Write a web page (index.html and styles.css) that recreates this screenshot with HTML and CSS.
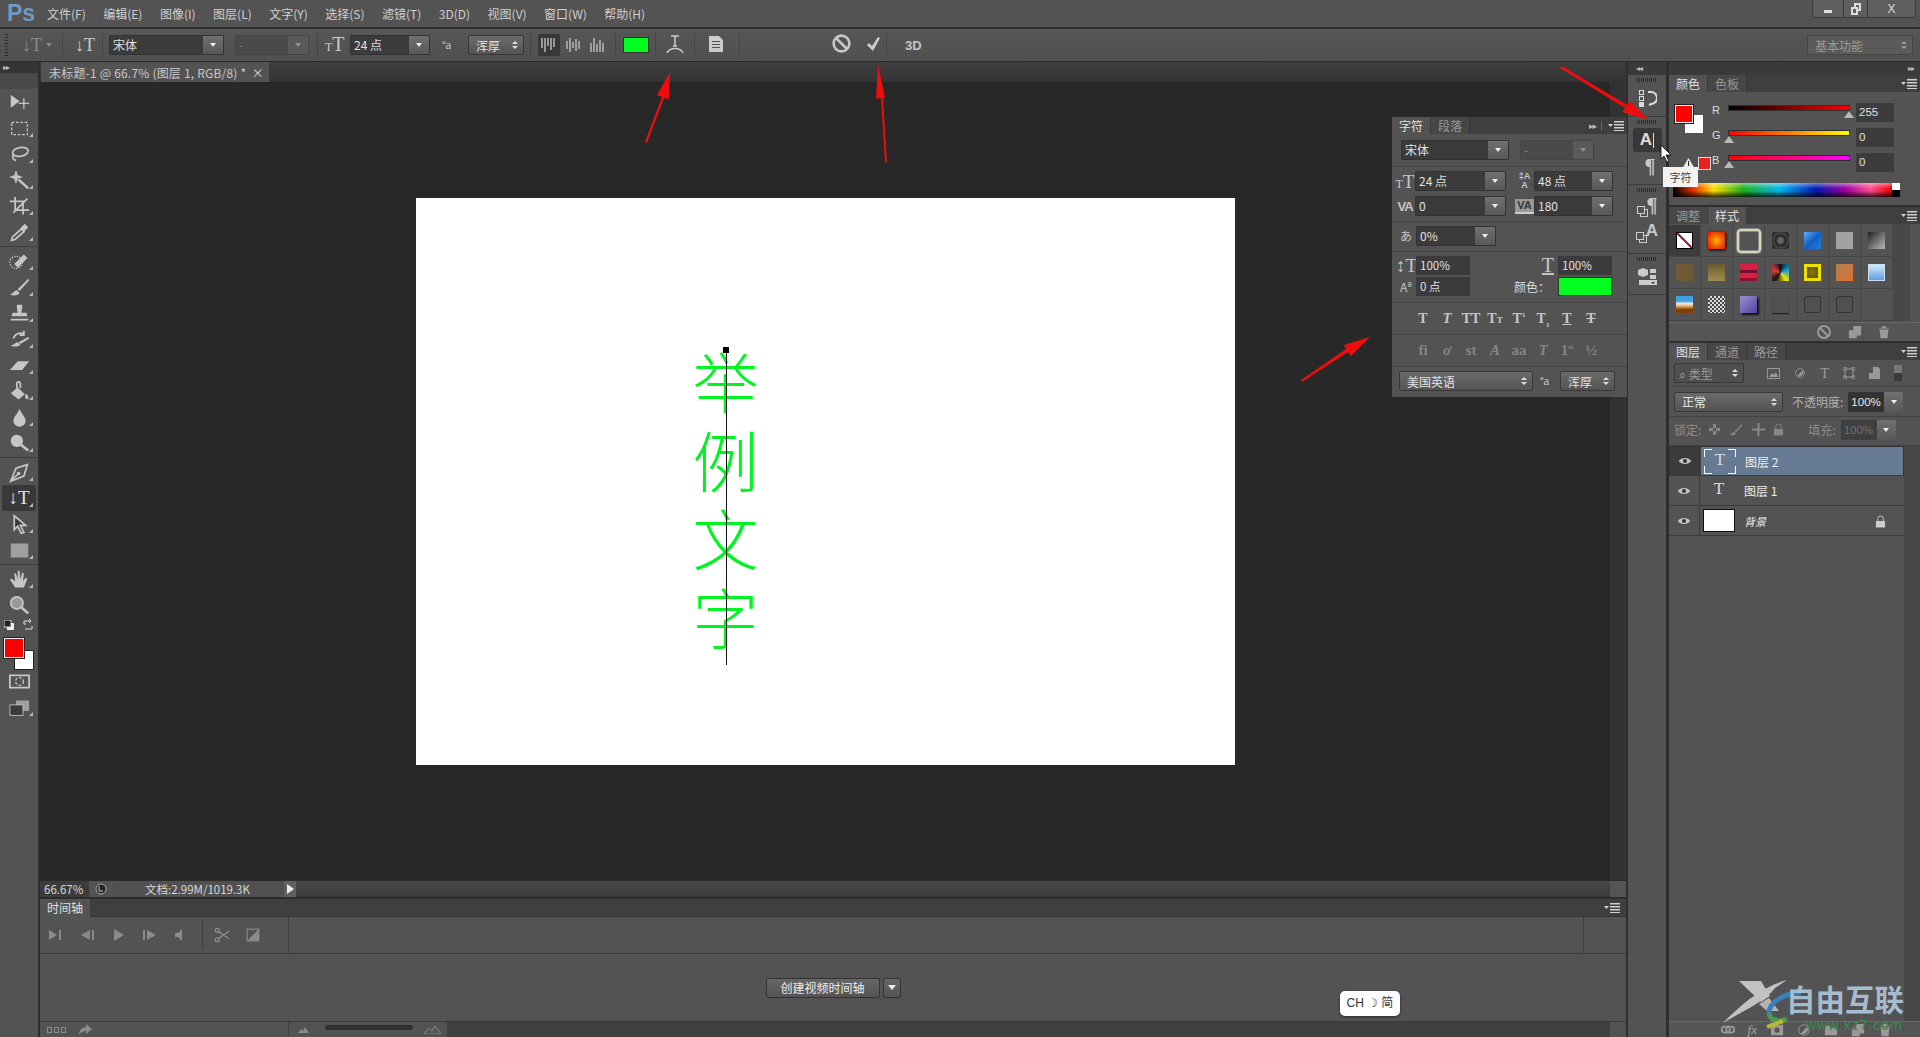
FILE: index.html
```html
<!DOCTYPE html>
<html lang="zh-CN">
<head>
<meta charset="utf-8">
<title>Photoshop</title>
<link rel="stylesheet" href="styles.css">
</head>
<body>
<svg class="sprite" aria-hidden="true">
  <defs>
    <symbol id="i-move" viewBox="0 0 24 24"><path d="M2 3v15l10-7.500z"/><path class="ln" d="M17 7v12M11 13h12"/></symbol>
    <symbol id="i-marquee" viewBox="0 0 24 24"><rect class="ln dash" x="3" y="5" width="18" height="14"/></symbol>
    <symbol id="i-lasso" viewBox="0 0 24 24"><ellipse class="ln w2" cx="13" cy="9" rx="9" ry="5" transform="rotate(-10 13 9)"/><path class="ln w2" d="M5 12c-2 3 0 6 3 7"/></symbol>
    <symbol id="i-wand" viewBox="0 0 24 24"><path d="M8 0l2 6 6 2-6 2-2 6-2-6-6-2 6-2z"/><path class="ln w3" d="M11 11l11 10"/></symbol>
    <symbol id="i-crop" viewBox="0 0 24 24"><path class="ln w2" d="M7 1v15h16M1 6h15v15M5 19L21 3"/></symbol>
    <symbol id="i-drop" viewBox="0 0 24 24"><path class="ln w2" d="M3 21l1-4 10-9 3 3-10 9z"/><path d="M13 7l5-5 4 4-5 5z"/></symbol>
    <symbol id="i-heal" viewBox="0 0 24 24"><circle class="ln dot" cx="8" cy="13" r="7"/><path class="ln w6" d="M8 17L19 6"/></symbol>
    <symbol id="i-brush" viewBox="0 0 24 24"><path d="M22 2L10 14l2 2L23 4z"/><path d="M9 15c-3 0-4 4-8 5 5 2 10 1 11-2z"/></symbol>
    <symbol id="i-stamp" viewBox="0 0 24 24"><path d="M9 2h6v4l-1 5h6l1 4H3l1-4h6L9 6zM2 18h20v2H2z"/></symbol>
    <symbol id="i-history" viewBox="0 0 24 24"><path d="M22 9L11 15l2 2 10-6z"/><path d="M10 15c-3 0-4 3-8 4 5 2 10 1 11-1z"/><path class="ln w2" d="M5 11a8 8 0 0 1 12-5M17 2v5h-5"/></symbol>
    <symbol id="i-eraser" viewBox="0 0 24 24"><path d="M1 17L10 7h13l-8 10z"/></symbol>
    <symbol id="i-bucket" viewBox="0 0 24 24"><path d="M2 14L10 7l8 8-7 6z"/><path class="ln w2" d="M9 8V3a2 2 0 0 1 4 0v5"/><path d="M19 14c2 2 4 4 3 6a2 2 0 0 1-3 0c-1-2 0-4 0-6z"/></symbol>
    <symbol id="i-blur" viewBox="0 0 24 24"><path d="M12 2c2 6 7 9 7 14a7 6.500 0 0 1-14 0c0-5 5-8 7-14z"/></symbol>
    <symbol id="i-dodge" viewBox="0 0 24 24"><circle cx="9" cy="9" r="7"/><path class="ln w3" d="M13 13l9 7"/></symbol>
    <symbol id="i-pen" viewBox="0 0 24 24"><path class="ln w2" d="M21 3L8 7 2 22l15-6 4-13zM2 22l8-8"/><circle cx="11" cy="13" r="2"/></symbol>
    <symbol id="i-path" viewBox="0 0 24 24"><path class="ln w2 dk" d="M6 2v16l4-4 4 8 3-1-4-8h6z"/></symbol>
    <symbol id="i-rect" viewBox="0 0 24 24"><rect x="2" y="4" width="20" height="16" class="gr"/></symbol>
    <symbol id="i-hand" viewBox="0 0 24 24"><path d="M7 21L1 12l2-1 4 3-1-9 2 0 2 7 0-10h2l1 10 2-8 2 1-1 9 3-4 2 1-4 10z"/></symbol>
    <symbol id="i-zoom" viewBox="0 0 24 24"><circle class="ln w2 fl" cx="9" cy="9" r="7"/><path class="ln w3" d="M14 14l8 7"/></symbol>
    <symbol id="i-mask" viewBox="0 0 24 24"><rect class="ln w2" x="1" y="5" width="22" height="14"/><circle class="ln dash" cx="12" cy="12" r="4.500"/></symbol>
    <symbol id="i-screen" viewBox="0 0 24 24"><rect x="8" y="4" width="15" height="12" class="gr"/><rect class="ln w1 dk" x="1" y="9" width="15" height="12"/></symbol>
    <symbol id="i-eye" viewBox="0 0 24 14"><path d="M1 7c5-7 17-7 22 0-5 7-17 7-22 0z"/><circle cx="12" cy="7" r="3.500" fill="#333"/></symbol>
    <symbol id="i-lock" viewBox="0 0 12 14"><path class="ln w1" d="M3 7V4a3 3 0 0 1 6 0v3"/><rect x="1" y="6.500" width="10" height="7"/></symbol>
    <symbol id="i-nosign" viewBox="0 0 16 16"><circle class="ln w2" cx="8" cy="8" r="6"/><path class="ln w2" d="M4 4l8 8"/></symbol>
    <symbol id="i-new" viewBox="0 0 16 16"><path d="M6 1h9v11H10v3H1V6h5z"/></symbol>
    <symbol id="i-trash" viewBox="0 0 16 16"><path d="M3 5h10l-1 10H4zM2 3h12v1H2zM6 1h4v2H6z"/></symbol>
    <symbol id="i-link" viewBox="0 0 16 16"><rect class="ln w2" x="1" y="4" width="9" height="7" rx="3"/><rect class="ln w2" x="6" y="4" width="9" height="7" rx="3"/></symbol>
    <symbol id="i-lmask" viewBox="0 0 16 16"><path fill-rule="evenodd" d="M1 2h14v12H1zM8 5a3 3 0 1 0 0 6 3 3 0 0 0 0-6z"/></symbol>
    <symbol id="i-half" viewBox="0 0 16 16"><circle class="ln w1" cx="8" cy="8" r="6"/><path d="M12 4a6 6 0 0 1-8 8z"/></symbol>
    <symbol id="i-folder" viewBox="0 0 16 16"><path d="M1 3h5l2 2h7v9H1z"/></symbol>
    <symbol id="i-scissors" viewBox="0 0 24 24"><circle class="ln w2" cx="5" cy="5" r="3"/><circle class="ln w2" cx="5" cy="19" r="3"/><path class="ln w2" d="M7 7l16 11M7 17L23 6"/></symbol>
    <symbol id="i-trans" viewBox="0 0 24 24"><rect class="ln w2" x="2" y="2" width="20" height="20"/><path d="M22 2v20H2z"/></symbol>
    <symbol id="i-menu" viewBox="0 0 16 10"><path d="M0 3h5L2.500 6zM6 0h10v1.500H6zM6 3h10v1.500H6zM6 6h10v1.500H6zM6 9h10v1H6z"/></symbol>
  </defs>
</svg>

<div class="app">
  <header class="menubar">
    <span class="logo">Ps</span>
    <nav class="menus">
      <span>文件(F)</span><span>编辑(E)</span><span>图像(I)</span><span>图层(L)</span><span>文字(Y)</span><span>选择(S)</span><span>滤镜(T)</span><span>3D(D)</span><span>视图(V)</span><span>窗口(W)</span><span>帮助(H)</span>
    </nav>
    <div class="winbtns">
      <span class="winbtn wb-min"><svg width="10" height="10" viewBox="0 0 10 10"><rect x="1" y="6" width="8" height="3" fill="#ddd"/></svg></span>
      <span class="winbtn wb-max"><svg width="10" height="12" viewBox="0 0 10 12"><path d="M3 0h7v8H7v4H0V4h3zM2 6v4h3V6zM5 2v2h2v2h1V2z" fill="#ddd"/></svg></span>
      <span class="winbtn wb-close">X</span>
    </div>
  </header>

  <div class="optionbar">
    <span class="grip-v"></span>
    <span class="ob-tool dim m14"><span class="serif big">↓T</span><i class="caret"></i></span>
    <span class="sep m8"></span>
    <span class="serif big m12 w18">↓T</span>
    <span class="sep m9"></span>
    <span class="sel m6 w115"><span class="val">宋体</span><span class="drop"></span></span>
    <span class="sel off m11 w74"><span class="val">-</span><span class="drop"></span></span>
    <span class="sep m8"></span>
    <span class="serif big m7 w18 tsize"><small>T</small>T</span>
    <span class="sel m7 w80"><span class="val">24 点</span><span class="drop"></span></span>
    <span class="aa m12">ªa</span>
    <span class="pop m10 w56"><span>浑厚</span><i class="updown"></i></span>
    <span class="sep m6"></span>
    <span class="alignbtn on m7"><svg width="16" height="14" viewBox="0 0 16 14"><path class="bars" d="M1 0v10M4 0v14M7 0v8M10 0v12M13 0v9"/></svg></span>
    <span class="alignbtn m4"><svg width="16" height="14" viewBox="0 0 16 14"><path class="bars" d="M1 3v8M4 0v14M7 4v6M10 1v12M13 3v8"/></svg></span>
    <span class="alignbtn m4"><svg width="16" height="14" viewBox="0 0 16 14"><path class="bars" d="M1 5v9M4 0v14M7 6v8M10 2v12M13 5v9"/></svg></span>
    <span class="sep m7"></span>
    <span class="colorchip m7"></span>
    <span class="sep m6"></span>
    <span class="m10 w18"><svg width="18" height="22" viewBox="0 0 18 22"><path d="M5 3h8M9 3v10M7 13h4" class="stk"/><path d="M1 20c3-6 13-6 16 0" class="stk"/></svg></span>
    <span class="sep m10"></span>
    <span class="m13 w18"><svg width="16" height="18" viewBox="0 0 16 18"><path fill="#ccc" fill-rule="evenodd" d="M1 1h10l4 4v12H1zM4 6v1h8V6zM4 9v1h8V9zM4 12v1h8v-1z"/></svg></span>
    <span class="sep m13"></span>
    <span class="m91 w18"><svg class="ic" width="16" height="16"><use href="#i-nosign"/></svg></span>
    <span class="m17 w18"><svg width="16" height="16" viewBox="0 0 16 16"><path fill="#ccc" d="M1 9l2-2 3 3 6-9 2 1-7 13z"/></svg></span>
    <span class="sep m2"></span>
    <span class="threed m18">3D</span>
    <span class="grow"></span>
    <span class="pop dimpop w106"><span>基本功能</span><i class="updown"></i></span>
  </div>

  <main class="main">
    <aside class="toolbar">
      <div class="tb-head">▸▸</div>
      <div class="tb-grip"></div>
      <div class="tools">
        <span class="tool plain"><svg class="ic"><use href="#i-move"/></svg></span>
        <span class="tool"><svg class="ic"><use href="#i-marquee"/></svg></span>
        <span class="tool"><svg class="ic"><use href="#i-lasso"/></svg></span>
        <span class="tool"><svg class="ic"><use href="#i-wand"/></svg></span>
        <span class="tool"><svg class="ic"><use href="#i-crop"/></svg></span>
        <span class="tool"><svg class="ic"><use href="#i-drop"/></svg></span>
        <span class="tool-sep"></span>
        <span class="tool"><svg class="ic"><use href="#i-heal"/></svg></span>
        <span class="tool"><svg class="ic"><use href="#i-brush"/></svg></span>
        <span class="tool"><svg class="ic"><use href="#i-stamp"/></svg></span>
        <span class="tool"><svg class="ic"><use href="#i-history"/></svg></span>
        <span class="tool"><svg class="ic"><use href="#i-eraser"/></svg></span>
        <span class="tool"><svg class="ic"><use href="#i-bucket"/></svg></span>
        <span class="tool"><svg class="ic"><use href="#i-blur"/></svg></span>
        <span class="tool"><svg class="ic"><use href="#i-dodge"/></svg></span>
        <span class="tool-sep"></span>
        <span class="tool"><svg class="ic"><use href="#i-pen"/></svg></span>
        <span class="tool active"><span class="serif toolT">↓T</span></span>
        <span class="tool"><svg class="ic"><use href="#i-path"/></svg></span>
        <span class="tool"><svg class="ic"><use href="#i-rect"/></svg></span>
        <span class="tool-sep"></span>
        <span class="tool"><svg class="ic"><use href="#i-hand"/></svg></span>
        <span class="tool plain"><svg class="ic"><use href="#i-zoom"/></svg></span>
      </div>
      <div class="swaprow">
        <svg width="10" height="10" viewBox="0 0 10 10"><rect x="3" y="3" width="7" height="7" fill="#eee"/><rect x="0" y="0" width="7" height="7" fill="#222" stroke="#ddd"/></svg>
        <svg width="12" height="12" viewBox="0 0 12 12"><path d="M2 5V2h7M7 0l2 2-2 2M2 5l2 0M10 7v3H3" stroke="#ddd" fill="none"/></svg>
      </div>
      <div class="fgbg"><span class="bgc"></span><span class="fgc"></span></div>
      <span class="tool plain mid"><svg class="ic"><use href="#i-mask"/></svg></span>
      <span class="tool"><svg class="ic"><use href="#i-screen"/></svg></span>
    </aside>

    <section class="center">
      <div class="docbar">
        <div class="doctab"><span>未标题-1 @ 66.7% (图层 1, RGB/8) *</span><b>×</b></div>
      </div>
      <div class="workrow">
        <div class="workspace">
          <div class="canvas">
            <div class="vtext">举例文字</div>
            <div class="caret-line"></div>
            <div class="caret-box"></div>
          </div>
        </div>
        <div class="vscroll"></div>
      </div>
      <div class="statusbar">
        <span class="zoomv">66.67%</span>
        <span class="stico"><svg width="12" height="12" viewBox="0 0 12 12"><circle cx="6" cy="6" r="5" fill="#222" stroke="#aaa"/><path d="M4 3v5h4" stroke="#ccc" fill="none"/></svg></span>
        <span class="docinfo">文档:2.99M/1019.3K</span>
        <span class="stplay"></span>
        <span class="hscroll"></span>
        <span class="corner"></span>
      </div>
      <div class="timeline">
        <div class="tl-tabs">
          <span class="tab on">时间轴</span>
          <span class="grow"></span>
          <svg class="menuic" width="16" height="10"><use href="#i-menu"/></svg>
        </div>
        <div class="tl-ctrl">
          <div class="tl-btns">
            <svg width="14" height="10" viewBox="0 0 14 10"><path d="M0 0l8 5-8 5zM10 0h2v10h-2z"/></svg>
            <svg width="14" height="10" viewBox="0 0 14 10"><path d="M9 0L0 5l9 5zM11 0h2v10h-2z"/></svg>
            <svg width="12" height="12" viewBox="0 0 12 12"><path d="M1 0l10 6-10 6z"/></svg>
            <svg width="14" height="10" viewBox="0 0 14 10"><path d="M0 0h2v10H0zM4 0l9 5-9 5z"/></svg>
            <svg width="10" height="12" viewBox="0 0 10 12"><path d="M7 0v12L3 8H0V4h3z"/></svg>
          </div>
          <div class="tl-edit">
            <svg class="ic2" width="18" height="16"><use href="#i-scissors"/></svg>
            <svg class="ic2" width="14" height="14"><use href="#i-trans"/></svg>
          </div>
          <div class="tl-track"></div>
          <div class="tl-end"></div>
        </div>
        <div class="tl-body">
          <span class="tl-create">创建视频时间轴</span>
          <span class="tl-caret"></span>
        </div>
        <div class="tl-foot">
          <div class="tl-foot-l">
            <span class="tiny"></span><span class="tiny"></span><span class="tiny"></span>
            <svg class="fwd" width="14" height="12" viewBox="0 0 14 12"><path fill="#8a8a8a" d="M8 0l6 5-6 5V7C5 7 3 8 1 11c0-5 3-8 7-8z"/></svg>
          </div>
          <div class="tl-foot-m">
            <svg width="11" height="6" viewBox="0 0 11 6"><path d="M0 6l3-4 2 2 2-4 4 6z" fill="#8a8a8a"/></svg>
            <span class="tl-slider"></span>
            <svg width="17" height="8" viewBox="0 0 17 8"><path d="M0 8l5-6 3 3 3-5 6 8z" fill="none" stroke="#8a8a8a"/></svg>
          </div>
          <div class="tl-foot-r"></div>
        </div>
      </div>
    </section>

    <aside class="dock">
      <div class="collapse-bar collapse-left">◂◂</div>
      <div class="dk-group g1"><span class="grip-h"></span>
        <svg class="dk-ic" width="20" height="20" viewBox="0 0 20 20"><path fill="#ddd" fill-rule="evenodd" d="M2 2h5v5H2zM3 3v3h3V3zM2 8h5v5H2zM3 9v3h3V9zM2 14h5v5H2z"/><path fill="none" stroke="#ddd" stroke-width="2" d="M11 4h3a6 6 0 0 1 0 12l-2 1"/></svg>
      </div>
      <div class="dk-group g2"><span class="grip-h"></span>
        <span class="dk-a"><b>A</b><i></i></span>
        <span class="dk-p">¶</span>
      </div>
      <div class="dk-group g3"><span class="grip-h"></span>
        <span class="dk-p small"><i class="squares"></i>¶</span>
        <span class="dk-p small cap"><i class="squares"></i>A</span>
      </div>
      <div class="dk-group g4"><span class="grip-h"></span>
        <svg class="dk-ic" width="20" height="20" viewBox="0 0 20 20"><path fill="#ccc" d="M6 1l5 2v5l-5 2-5-2V3zM13 2h6v4h-6zM13 8h6v4h-6zM2 13h18v5H2z"/><path fill="#333" d="M14 15h4l-2 2z"/></svg>
      </div>
    </aside>

    <aside class="panels">
      <div class="collapse-bar collapse-right">▸▸</div>

      <section class="panel p-color">
        <div class="ptabs"><span class="tab on">颜色</span><span class="tab">色板</span><span class="grow"></span><svg class="menuic" width="16" height="10"><use href="#i-menu"/></svg></div>
        <div class="colorbody">
          <div class="colortop">
            <div class="swatches"><span class="sw-bg"></span><span class="sw-fg"></span></div>
            <div class="sliders">
              <div class="sl-row"><span class="sl-lbl">R</span><span class="track tr"><i class="thumb thumb-end"></i></span><span class="val-box">255</span></div>
              <div class="sl-row"><span class="sl-lbl">G</span><span class="track tg"><i class="thumb"></i></span><span class="val-box">0</span></div>
              <div class="sl-row"><span class="sl-lbl">B</span><span class="track tb"><i class="thumb"></i></span><span class="val-box">0</span></div>
            </div>
          </div>
          <div class="gamut"><svg width="13" height="11" viewBox="0 0 13 11"><path d="M6.500 0L13 11H0z" fill="#eee"/><path d="M6 3h1v5H6zM6 9h1v1H6z" fill="#222"/></svg><span class="gamut-chip"></span></div>
          <div class="spectrum"><span class="wk"></span></div>
        </div>
      </section>

      <section class="panel p-styles">
        <div class="ptabs"><span class="tab">调整</span><span class="tab on">样式</span><span class="grow"></span><svg class="menuic" width="16" height="10"><use href="#i-menu"/></svg></div>
        <div class="stylesbody">
          <div class="stylegrid">
            <span class="cell sel-cell"><i class="st st-none"></i></span>
            <span class="cell"><i class="st st-fire"></i></span>
            <span class="cell"><i class="st st-frame"></i></span>
            <span class="cell"><i class="st st-dark"></i></span>
            <span class="cell"><i class="st st-blue"></i></span>
            <span class="cell"><i class="st st-gray"></i></span>
            <span class="cell"><i class="st st-steel"></i></span>
            <span class="cell"><i class="st st-brown"></i></span>
            <span class="cell"><i class="st st-khaki"></i></span>
            <span class="cell"><i class="st st-red"></i></span>
            <span class="cell"><i class="st st-multi"></i></span>
            <span class="cell"><i class="st st-gold"></i></span>
            <span class="cell"><i class="st st-orange"></i></span>
            <span class="cell"><i class="st st-sky"></i></span>
            <span class="cell"><i class="st st-land"></i></span>
            <span class="cell"><i class="st st-noise"></i></span>
            <span class="cell"><i class="st st-purple"></i></span>
            <span class="cell"><i class="st st-shadow"></i></span>
            <span class="cell"><i class="st st-outline"></i></span>
            <span class="cell"><i class="st st-outline"></i></span>
            <span class="cell blank"></span>
          </div>
          <div class="stylescroll"></div>
        </div>
        <div class="pfoot pfoot-styles">
          <svg class="fic" width="16" height="16"><use href="#i-nosign"/></svg>
          <svg class="fic" width="14" height="14"><use href="#i-new"/></svg>
          <svg class="fic" width="14" height="14"><use href="#i-trash"/></svg>
        </div>
      </section>

      <section class="panel p-layers">
        <div class="ptabs"><span class="tab on">图层</span><span class="tab">通道</span><span class="tab">路径</span><span class="grow"></span><svg class="menuic" width="16" height="10"><use href="#i-menu"/></svg></div>
        <div class="lrow lfilter">
          <span class="pop fpop"><span>⌕ 类型</span><i class="updown"></i></span>
          <span class="ficons">
            <svg width="13" height="11" viewBox="0 0 13 11"><path fill="none" stroke="#999" d="M.5.5h12v10H.5z"/><path fill="#999" d="M2 9l3-4 2 2 2-3 2 5z"/></svg>
            <svg width="12" height="12"><use href="#i-half"/></svg>
            <span class="serif ft">T</span>
            <svg width="12" height="12" viewBox="0 0 12 12"><path fill="none" stroke="#999" d="M2 2h8v8H2zM0 0h3v3H0zM9 0h3v3H9zM0 9h3v3H0zM9 9h3v3H9z"/></svg>
            <svg width="11" height="12" viewBox="0 0 11 12"><path fill="#999" d="M4 0h5l2 2v10H4zM0 6h6v6H0z"/></svg>
          </span>
          <span class="ftoggle"></span>
        </div>
        <div class="lrow lblend">
          <span class="pop blendpop"><span>正常</span><i class="updown"></i></span>
          <span class="lbl">不透明度:</span>
          <span class="numfield nf-op"><span class="numv">100%</span><span class="drop"></span></span>
        </div>
        <div class="lrow llock">
          <span class="lbl dimlbl">锁定:</span>
          <svg class="lk" width="11" height="11" viewBox="0 0 11 11"><path fill="#888" d="M0 0h11v11H0z"/><path fill="#555" d="M0 0h4v4H0zM7 0h4v4H7zM4 4h3v3H4zM0 7h4v4H0zM7 7h4v4H7z"/></svg>
          <svg class="lk lkdim" width="16" height="14"><use href="#i-brush"/></svg>
          <svg class="lk" width="13" height="13" viewBox="0 0 13 13"><path stroke="#888" stroke-width="2" d="M6.500 0v13M0 6.500h13"/></svg>
          <svg class="lk lkdim" width="11" height="13"><use href="#i-lock"/></svg>
          <span class="lbl dimlbl fillbl">填充:</span>
          <span class="numfield nf-fill"><span class="numv">100%</span><span class="drop"></span></span>
        </div>
        <div class="layers">
          <div class="layerlist">
            <div class="layer sel">
              <span class="eye"><svg width="14" height="8"><use href="#i-eye"/></svg></span>
              <div class="lmain"><span class="lthumb tsel serif">T</span><span class="lname">图层 2</span></div>
            </div>
            <div class="layer">
              <span class="eye"><svg width="14" height="8"><use href="#i-eye"/></svg></span>
              <div class="lmain"><span class="lthumb serif">T</span><span class="lname">图层 1</span></div>
            </div>
            <div class="layer">
              <span class="eye"><svg width="14" height="8"><use href="#i-eye"/></svg></span>
              <div class="lmain"><span class="lthumb white"></span><span class="lname it">背景</span><svg class="lockbg" width="11" height="13"><use href="#i-lock"/></svg></div>
            </div>
          </div>
          <div class="layerscroll"></div>
        </div>
        <div class="pfoot pfoot-layers">
          <svg class="fic" width="14" height="14"><use href="#i-link"/></svg>
          <span class="fx">fx</span>
          <svg class="fic" width="14" height="14"><use href="#i-lmask"/></svg>
          <svg class="fic" width="14" height="14"><use href="#i-half"/></svg>
          <svg class="fic" width="14" height="14"><use href="#i-folder"/></svg>
          <svg class="fic" width="14" height="14"><use href="#i-new"/></svg>
          <svg class="fic" width="14" height="14"><use href="#i-trash"/></svg>
        </div>
      </section>
    </aside>
  </main>

  <!-- floating character panel -->
  <section class="charpanel">
    <div class="ptabs"><span class="tab on">字符</span><span class="tab">段落</span><span class="grow"></span><span class="cp-arrows">▸▸</span><svg class="menuic" width="16" height="10"><use href="#i-menu"/></svg></div>
    <div class="cp-sec s-a">
      <span class="sel w108"><span class="val">宋体</span><span class="drop"></span></span>
      <span class="sel off w74 m11"><span class="val">-</span><span class="drop"></span></span>
    </div>
    <div class="cp-sec s-b">
      <div class="cp-row">
        <span class="cp-ic serif"><small>T</small>T</span>
        <span class="sel w91"><span class="val">24 点</span><span class="drop"></span></span>
        <span class="cp-ic2 lead">‡A<br>A</span>
        <span class="sel w79"><span class="val">48 点</span><span class="drop"></span></span>
      </div>
      <div class="cp-row">
        <span class="cp-ic va">VA</span>
        <span class="sel w91"><span class="val">0</span><span class="drop"></span></span>
        <span class="cp-ic2 vab">VA</span>
        <span class="sel w79"><span class="val">180</span><span class="drop"></span></span>
      </div>
    </div>
    <div class="cp-sec s-c">
      <span class="cp-ic sm">あ</span>
      <span class="sel w80"><span class="val">0%</span><span class="drop"></span></span>
    </div>
    <div class="cp-sec s-d">
      <div class="cp-row">
        <span class="cp-ic serif">↕T</span>
        <span class="numbox">100%</span>
        <span class="cp-ic3 serif">T</span>
        <span class="numbox">100%</span>
      </div>
      <div class="cp-row">
        <span class="cp-ic sm aab">Aª</span>
        <span class="numbox">0 点</span>
        <span class="cp-color-lbl">颜色：</span>
        <span class="cp-color"></span>
      </div>
    </div>
    <div class="cp-sec s-e serif">
      <b>T</b><b><em>T</em></b><b>TT</b><b>T<small>T</small></b><b>T<sup>1</sup></b><b>T<sub>1</sub></b><b><u>T</u></b><b><s>T</s></b>
    </div>
    <div class="cp-sec s-e s-f serif">
      <b>fi</b><b><em>ơ</em></b><b>st</b><b><em>A</em></b><b>aa</b><b><em>T</em></b><b>1<sup>st</sup></b><b>½</b>
    </div>
    <div class="cp-sec s-g">
      <span class="pop w134"><span>美国英语</span><i class="updown"></i></span>
      <span class="aa m7">ªa</span>
      <span class="pop w55 m6"><span>浑厚</span><i class="updown"></i></span>
    </div>
  </section>

  <!-- overlays -->
  <svg class="arrows" width="1920" height="1037" viewBox="0 0 1920 1037">
    <path class="arrow" d="M645 142L662 97 657 95 670 72 669 99 664 98 647 143z"/>
    <path class="arrow" d="M885 162L881 98 876 99 878 64 885 98 883 98 887 162z"/>
    <path class="arrow" d="M1560 68L1625 108 1622 112 1648 120 1630 101 1627 105 1562 66z"/>
    <path class="arrow" d="M1302 382L1348 352 1351 356 1370 337 1344 345 1346 349 1301 380z"/>
  </svg>
  <svg class="cursor" width="12" height="19" viewBox="0 0 12 19"><path d="M1 1v14l3-3 3 6 2-1-3-6h5z" fill="#fff" stroke="#000" stroke-width=".8"/></svg>
  <div class="tooltip">字符</div>
  <div class="ime">CH ☽ 简</div>
  <div class="watermark">
    <svg class="wm-logo" width="84" height="50" viewBox="0 0 84 50">
      <path fill="#c2c2c2" d="M64 1C45 6 25 18 0 44 18 33 42 23 52 9z"/>
      <path fill="#c2c2c2" d="M16 2H38L47 17 38 23z"/>
      <path fill="#b4b4b4" d="M36 25L46 19 56 32H44z"/>
      <path fill="none" stroke="#3a7fb5" stroke-width="5" d="M78 14C60 14 46 24 46 34"/>
      <path fill="none" stroke="#4a9a50" stroke-width="5" d="M46 34C47 42 56 44 64 40"/>
      <path fill="none" stroke="#b8b830" stroke-width="4" d="M44 48C48 46 54 44 60 42"/>
    </svg>
    <div class="wm-text"><span class="wm-cn">自由互联</span><span class="wm-url">www.xz7.com</span></div>
  </div>
</div>
</body>
</html>
```

FILE: styles.css
```css
* { box-sizing: border-box; }
html, body { margin: 0; height: 100%; overflow: hidden; background: #535353; }
body { font-family: "Noto Sans CJK SC", "Liberation Sans", sans-serif; font-size: 12px; color: #d6d6d6; }
i { font-style: normal; }
.sprite { position: absolute; width: 0; height: 0; }
.grow { flex: 1; }
.serif { font-family: "Liberation Serif", "Noto Sans CJK SC", serif; }

.app { position: relative; width: 1920px; height: 1037px; display: flex; flex-direction: column; }

/* shared icon styling */
svg { color: #c6c6c6; fill: currentColor; flex: none; }
svg .ln { fill: none; stroke: currentColor; stroke-width: 1.500; }
svg .w1 { stroke-width: 1; } svg .w2 { stroke-width: 2; } svg .w3 { stroke-width: 3; } svg .w6 { stroke-width: 6; }
svg .dash { stroke-dasharray: 3 2; }
svg .dot { stroke-dasharray: 1.500 1.500; }
svg .dk { fill: #3a3a3a; }
svg .fl { fill: #999; }
svg .gr { fill: #a0a0a0; }
svg path.stk { fill: none; stroke: #ccc; stroke-width: 1.500; }
svg path.bars { fill: none; stroke: #b8b8b8; stroke-width: 1.500; }

/* menu */
.menubar { height: 29px; flex: none; display: flex; align-items: flex-start; background: #535353; border-bottom: 2px solid #2e2e2e; position: relative; }
.logo { font: bold 23px/26px "Liberation Sans", sans-serif; color: #6f9ac4; width: 47px; padding-left: 7px; }
.menus { display: flex; gap: 17.500px; line-height: 27px; color: #cfcfcf; }
.winbtns { margin-left: auto; margin-right: 4px; display: flex; background: #5e5e5e; height: 18px; border: 1px solid #3a3a3a; border-top: 0; border-radius: 0 0 2px 2px; }
.winbtn { display: flex; align-items: center; justify-content: center; border-left: 1px solid #3a3a3a; color: #ddd; font: 12px "Liberation Sans", sans-serif; }
.wb-min { width: 30px; border-left: 0; }
.wb-max { width: 24px; }
.wb-close { width: 48px; }

/* option bar */
.optionbar { height: 33px; flex: none; display: flex; align-items: center; padding-left: 5px; padding-right: 7px; background: linear-gradient(#565656, #505050); border-bottom: 1px solid #2e2e2e; }
.grip-v { width: 3px; height: 22px; background: repeating-linear-gradient(#2c2c2c 0 1px, transparent 1px 3px); }
.sep { width: 1px; height: 26px; background: #464646; flex: none; }
.big { font-size: 18px; line-height: 20px; color: #c8c8c8; white-space: nowrap; }
.big small { font-size: 12px; }
.dim { color: #8a8a8a; }
.dim .big { color: #8a8a8a; }
.ob-tool { display: flex; align-items: center; width: 32px; }
.caret { border: 3px solid transparent; border-top: 4px solid #8a8a8a; border-bottom: 0; margin-left: 4px; }
.m2 { margin-left: 2px; } .m4 { margin-left: 4px; } .m6 { margin-left: 6px; } .m7 { margin-left: 7px; } .m8 { margin-left: 8px; } .m9 { margin-left: 9px; } .m10 { margin-left: 10px; } .m11 { margin-left: 11px; } .m12 { margin-left: 12px; } .m13 { margin-left: 13px; } .m14 { margin-left: 14px; } .m17 { margin-left: 17px; } .m18 { margin-left: 18px; } .m91 { margin-left: 91px; }
.w18 { width: 18px; } .w55 { width: 55px; } .w56 { width: 56px; } .w74 { width: 74px; } .w79 { width: 79px; } .w80 { width: 80px; } .w91 { width: 91px; } .w106 { width: 106px; } .w108 { width: 108px; } .w115 { width: 115px; } .w134 { width: 134px; }
.tsize { font-size: 20px; }

.sel { display: flex; height: 20px; flex: none; background: #3b3b3b; border: 1px solid #333; border-radius: 1px; overflow: hidden; }
.sel .val { flex: 1; padding-left: 3px; line-height: 18px; color: #e0e0e0; white-space: nowrap; }
.drop { width: 20px; flex: none; background: linear-gradient(#707070, #585858); display: flex; align-items: center; justify-content: center; }
.drop::after { content: ""; border: 3px solid transparent; border-top: 4px solid #eee; border-bottom: 0; }
.sel.off { background: #4a4a4a; border-color: #454545; }
.sel.off .val { color: #808080; }
.sel.off .drop { background: #5a5a5a; }
.sel.off .drop::after { border-top-color: #909090; }
.aa { color: #c8c8c8; font: 13px "Liberation Serif", serif; width: 16px; flex: none; }

.pop { display: flex; align-items: center; justify-content: space-between; height: 20px; flex: none; padding: 0 5px 0 7px; background: linear-gradient(#6a6a6a, #545454); border: 1px solid #383838; border-radius: 2px; color: #e4e4e4; white-space: nowrap; }
.updown { display: flex; flex-direction: column; gap: 2px; flex: none; }
.updown::before { content: ""; border: 3px solid transparent; border-bottom: 3px solid #ddd; border-top: 0; }
.updown::after { content: ""; border: 3px solid transparent; border-top: 3px solid #ddd; border-bottom: 0; }
.dimpop { background: #5a5a5a; border-color: #464646; color: #999; }
.dimpop .updown::before { border-bottom-color: #999; }
.dimpop .updown::after { border-top-color: #999; }

.alignbtn { display: flex; align-items: center; justify-content: center; width: 20px; height: 22px; flex: none; }
.alignbtn.on { background: #383838; border-radius: 2px; width: 22px; }
.colorchip { width: 26px; height: 16px; background: #00ff1e; border: 1px solid #333; flex: none; }
.threed { font: bold 13px "Liberation Sans", sans-serif; color: #c4c4c4; }

/* main */
.main { flex: 1; min-height: 0; display: flex; background: #2e2e2e; }

/* tools */
.toolbar { width: 38px; margin-right: 2px; flex: none; display: flex; flex-direction: column; align-items: center; background: #535353; }
.tb-head { width: 100%; height: 11px; background: #353535; color: #bbb; font: 8px/11px "DejaVu Sans", sans-serif; padding-left: 3px; letter-spacing: -1px; }
.tb-grip { width: 100%; height: 16px; background: #4a4a4a; }
.tools { display: flex; flex-direction: column; align-items: center; width: 100%; }
.tool { position: relative; width: 34px; height: 26px; display: flex; align-items: center; justify-content: center; flex: none; }
.tool::after { content: ""; position: absolute; right: 3px; bottom: 4px; border-left: 4px solid transparent; border-bottom: 4px solid #bbb; }
.tool.plain::after { display: none; }
.tool.active { background: #383838; border-radius: 2px; }
.ic { width: 21px; height: 21px; }
.tool-sep { width: 100%; height: 1px; margin: 1px 0; background: #3e3e3e; flex: none; }
.toolT { font-size: 19px; line-height: 20px; color: #e4e4e4; }
.swaprow { width: 30px; height: 14px; display: flex; justify-content: space-between; align-items: center; flex: none; }
.fgbg { position: relative; width: 30px; height: 36px; margin-top: 6px; flex: none; }
.fgc { position: absolute; left: 0; top: 0; width: 20px; height: 20px; background: #f00; border: 1px solid #eee; outline: 1px solid #222; }
.bgc { position: absolute; left: 11px; top: 13px; width: 18px; height: 18px; background: #fff; outline: 1px solid #222; }
.mid { margin-top: -6px; }

/* center */
.center { width: 1586px; flex: none; display: flex; flex-direction: column; margin-right: 2px; background: #2b2b2b; }
.docbar { height: 20px; flex: none; background: linear-gradient(#3e3e3e, #333); display: flex; align-items: flex-start; }
.doctab { margin-left: 1px; width: 228px; height: 20px; background: #535353; display: flex; align-items: center; justify-content: space-between; padding: 0 5px 0 8px; color: #c8c8c8; font-size: 12px; letter-spacing: .2px; white-space: nowrap; }
.doctab b { font-weight: 400; color: #ddd; }
.workrow { flex: 1; min-height: 0; display: flex; }
.workspace { flex: 1; display: flex; align-items: center; justify-content: center; background: #282828; }
.vscroll { width: 16px; background: #323232; flex: none; }
.canvas { position: relative; width: 819px; height: 567px; background: #fff; flex: none; }
.vtext { position: absolute; left: 277px; top: 152px; width: 66px; height: 314px; writing-mode: vertical-rl; text-orientation: upright; font-size: 66px; line-height: 66px; letter-spacing: 12.500px; color: #00f520; font-weight: 300; white-space: nowrap; }
.caret-line { position: absolute; left: 310px; top: 150px; width: 1px; height: 317px; background: #111; }
.caret-box { position: absolute; left: 307px; top: 149px; width: 6px; height: 6px; background: #000; }

.statusbar { height: 16px; flex: none; margin-top: 1px; display: flex; align-items: stretch; background: #4e4e4e; color: #d8d8d8; font: 11.500px/16px "Noto Sans CJK SC", "Liberation Sans", sans-serif; }
.zoomv { width: 49px; padding-left: 4px; background: #3c3c3c; flex: none; }
.stico { width: 24px; flex: none; display: flex; align-items: center; justify-content: center; background: #535353; }
.docinfo { width: 171px; flex: none; padding-left: 32px; background: #505050; white-space: nowrap; }
.stplay { width: 12px; flex: none; background: #606060; position: relative; }
.stplay::after { content: ""; position: absolute; left: 3px; top: 3px; border: 5px solid transparent; border-left: 7px solid #eee; border-right: 0; }
.hscroll { flex: 1; background: linear-gradient(#4a4a4a, #3a3a3a); }
.corner { width: 16px; flex: none; background: #555; }

/* timeline */
.timeline { height: 139px; flex: none; margin-top: 1px; background: #535353; display: flex; flex-direction: column; border-top: 1px solid #2e2e2e; }
.tl-tabs { height: 18px; flex: none; display: flex; align-items: center; background: #3f3f3f; border-bottom: 1px solid #333; padding-right: 6px; }
.tab { display: flex; align-items: center; justify-content: center; height: 100%; padding: 0 7px; color: #989898; background: #474747; border-right: 1px solid #3a3a3a; flex: none; font-size: 12px; }
.tab.on { color: #e0e0e0; background: #535353; }
.tl-tabs .tab { padding: 0 7px; width: 51px; height: 18px; }
.menuic { color: #d0d0d0; }
.tl-ctrl { height: 37px; flex: none; display: flex; align-items: stretch; border-bottom: 1px solid #3a3a3a; }
.tl-btns { width: 162px; display: flex; align-items: center; justify-content: space-between; padding: 0 17px 0 9px; }
.tl-btns svg { color: #8a8a8a; }
.tl-edit { width: 86px; display: flex; align-items: center; gap: 15px; padding-left: 10px; border-left: 1px solid #3f3f3f; margin: 3px 0; }
.ic2 { color: #8a8a8a; }
.tl-track { flex: 1; border-left: 1px solid #3f3f3f; }
.tl-end { width: 43px; border-left: 1px solid #3f3f3f; }
.tl-body { flex: 1; display: flex; align-items: center; justify-content: center; gap: 3px; background: #535353; }
.tl-create { width: 114px; height: 20px; line-height: 18px; text-align: center; color: #eee; background: linear-gradient(#666, #545454); border: 1px solid #333; border-radius: 2px; }
.tl-caret { width: 18px; height: 20px; background: linear-gradient(#666, #545454); border: 1px solid #333; border-radius: 2px; display: flex; align-items: center; justify-content: center; }
.tl-caret::after { content: ""; border: 4px solid transparent; border-top: 5px solid #eee; border-bottom: 0; }
.tl-foot { height: 16px; flex: none; display: flex; border-top: 1px solid #3a3a3a; }
.tl-foot-l { width: 248px; display: flex; align-items: center; gap: 2px; padding-left: 7px; }
.tiny { width: 5px; height: 6px; border: 1px solid #8a8a8a; }
.fwd { margin-left: 10px; }
.tl-foot-m { width: 159px; display: flex; align-items: center; padding-left: 9px; border-left: 1px solid #3f3f3f; }
.tl-slider { width: 88px; height: 5px; margin: 0 11px 5px 16px; background: #333; border-radius: 3px; border: 1px solid #2a2a2a; }
.tl-foot-r { flex: 1; background: #3f3f3f; margin-right: 16px; }

/* dock */
.dock { width: 38px; flex: none; margin-right: 3px; background: #535353; display: flex; flex-direction: column; }
.collapse-bar { height: 13px; flex: none; background: #3a3a3a; color: #bbb; font: 8px/13px "DejaVu Sans", sans-serif; letter-spacing: -1px; }
.collapse-left { padding-left: 8px; }
.collapse-right { text-align: right; padding-right: 6px; }
.dk-group { display: flex; flex-direction: column; align-items: center; border-bottom: 1px solid #3c3c3c; flex: none; padding-top: 3px; }
.g1 { height: 42px; } .g2 { height: 68px; } .g3 { height: 69px; } .g4 { height: 41px; }
.grip-h { width: 20px; height: 4px; background: repeating-linear-gradient(90deg, #2c2c2c 0 1px, transparent 1px 2px); flex: none; }
.dk-ic { margin-top: 6px; }
.dk-a { margin-top: 4px; width: 29px; height: 24px; background: #383838; border-radius: 3px; display: flex; align-items: center; justify-content: center; gap: 1px; font: bold 17px "Liberation Sans", sans-serif; color: #ddd; }
.dk-a b { font-weight: 700; }
.dk-a i { width: 1px; height: 15px; background: #ddd; }
.dk-p { margin-top: 0; height: 28px; font: bold 20px/28px "Liberation Serif", serif; color: #c8c8c8; position: relative; padding-left: 6px; }
.dk-p.small { margin-top: 1px; height: 25px; line-height: 24px; padding-left: 10px; }
.dk-p.cap { font-family: "Liberation Sans", sans-serif; font-size: 17px; }
.squares { position: absolute; left: 0; bottom: 4px; width: 8px; height: 8px; border: 1px solid #ccc; box-shadow: 3px 3px 0 -1px #535353, 3px 3px 0 0 #ccc; }

/* panels */
.panels { width: 251px; flex: none; display: flex; flex-direction: column; background: #2e2e2e; }
.panel { background: #535353; display: flex; flex-direction: column; flex: none; }
.ptabs { height: 17px; flex: none; display: flex; align-items: center; background: #3f3f3f; padding-right: 3px; }
.ptabs .tab { width: 39px; padding: 0; }
.p-color { height: 130px; margin-bottom: 2px; }
.colorbody { position: relative; flex: 1; padding: 11px 0 0 4px; }
.colortop { display: flex; }
.swatches { position: relative; width: 39px; height: 30px; flex: none; }
.sw-fg { position: absolute; left: 2px; top: 2px; width: 18px; height: 18px; background: #f00; border: 1px solid #eee; outline: 1px solid #222; }
.sw-bg { position: absolute; left: 12px; top: 12px; width: 18px; height: 18px; background: #fff; }
.sliders { display: flex; flex-direction: column; gap: 6px; }
.sl-row { display: flex; height: 19px; }
.sl-lbl { width: 16px; color: #ddd; font: 11px/15px "Liberation Sans", sans-serif; flex: none; }
.track { position: relative; width: 122px; height: 6px; margin-top: 2px; flex: none; border: 1px solid #2e2e2e; }
.tr { background: linear-gradient(90deg, #000, #f00); }
.tg { background: linear-gradient(90deg, #f00, #ff0); }
.tb { background: linear-gradient(90deg, #f00, #f0f); }
.thumb { position: absolute; left: -5px; top: 5px; border: 5px solid transparent; border-bottom: 7px solid #b8b8b8; border-top: 0; }
.thumb-end { left: auto; right: -5px; }
.val-box { width: 38px; height: 19px; margin-left: 6px; background: #3c3c3c; line-height: 19px; padding-left: 3px; color: #e0e0e0; flex: none; font-family: "Liberation Sans", sans-serif; font-size: 11.500px; }
.gamut { position: absolute; left: 13px; top: 65px; display: flex; align-items: center; gap: 3px; }
.gamut-chip { width: 13px; height: 13px; background: #e82020; border: 1px solid #ddd; }
.spectrum { position: relative; width: 227px; height: 14px; margin-top: 11px; background: linear-gradient(rgba(255,255,255,.45), rgba(255,255,255,0) 40%, rgba(0,0,0,0) 55%, rgba(0,0,0,.8)), linear-gradient(90deg, #000 0%, #e83000 9%, #ffe000 18%, #20b020 31%, #00b8f0 47%, #0018b0 63%, #a000a0 76%, #ff5090 87%, #f00000 96%); }
.wk { position: absolute; right: 0; top: 0; width: 8px; height: 14px; background: linear-gradient(#fff 50%, #000 50%); }
.p-styles { height: 134px; margin-bottom: 2px; }
.stylesbody { flex: 1; display: flex; }
.stylegrid { width: 224px; display: grid; grid-template-columns: repeat(7, 32px); grid-auto-rows: 32px; padding-top: 1px; flex: none; }
.cell { display: flex; align-items: center; justify-content: center; border-right: 1px solid #464646; border-bottom: 1px solid #464646; }
.cell.blank { background: #535353; border-right: 0; }
.sel-cell { background: #3c3c3c; }
.stylescroll { width: 17px; background: #484848; flex: none; margin-bottom: 1px; }
.st { display: block; width: 17px; height: 17px; }
.st-none { background: linear-gradient(45deg, #fff 46%, #b02030 46% 54%, #fff 54%); border: 1px solid #000; }
.st-fire { background: radial-gradient(circle, #ffb000, #e01000); box-shadow: 1px 1px 3px #000; }
.st-frame { width: 24px; height: 24px; border: 2px solid #d8d8b8; border-radius: 4px; box-shadow: 0 0 0 1px #888, inset 0 0 0 1px #888; }
.st-dark { background: radial-gradient(circle, #666 20%, #222 40%, #444 60%, #111); border-radius: 3px; }
.st-blue { background: linear-gradient(135deg, #66aaff, #1060c0 50%, #2080e0); }
.st-gray { background: #a2a2a2; }
.st-steel { background: linear-gradient(135deg, #222, #bbb); }
.st-brown { background: #6e5a34; }
.st-khaki { background: linear-gradient(#6b5a30, #a08c50); }
.st-red { background: linear-gradient(#d82040 0 35%, #701030 35% 50%, #d82040 50% 80%, #901030 80%); }
.st-multi { background: conic-gradient(#111, #10a0d0, #f0e010, #111, #e04040, #111); }
.st-gold { background: radial-gradient(#8a7a10, #5a5010); border: 3px solid #f0e000; }
.st-orange { background: linear-gradient(135deg, #b08050, #e07030); }
.st-sky { background: linear-gradient(#d0e8ff, #60a0e0); border: 1px solid #cde; }
.st-land { background: linear-gradient(#40a0e0 0 30%, #eee 45%, #e0b060 60%, #804000 80%); }
.st-noise { background: repeating-conic-gradient(#ddd 0 25%, #444 0 50%) 0 0 / 4px 4px; }
.st-purple { background: linear-gradient(135deg, #a090d0, #5040a0); box-shadow: 2px 2px 2px #111; }
.st-shadow { background: #505050; box-shadow: 0 1px 1px #222; }
.st-outline { background: #505050; border: 1px solid #333; border-radius: 2px; }
.pfoot { height: 16px; flex: none; display: flex; align-items: center; justify-content: flex-end; border-top: 1px solid #3c3c3c; background: #555; }
.fic { color: #9a9a9a; }
.pfoot-styles { height: 19px; gap: 15.500px; padding-right: 29px; border-top: 1px solid #666; }
.p-layers { flex: 1; min-height: 0; }
.lrow { display: flex; align-items: center; flex: none; padding-left: 5px; border-bottom: 1px solid #424242; }
.lfilter { height: 27px; }
.fpop { width: 70px; color: #999; background: #4f4f4f; padding-left: 4px; }
.ficons { display: flex; align-items: center; gap: 14px; margin-left: 23px; color: #999; }
.ficons svg { color: #999; }
.ft { font-size: 15px; color: #999; }
.ftoggle { width: 8px; height: 16px; margin-left: 14px; background: linear-gradient(#777 50%, #3a3a3a 50%); }
.lblend { height: 30px; }
.blendpop { width: 109px; color: #e8e8e8; }
.lbl { color: #b0b0b0; margin-left: 9px; white-space: nowrap; }
.dimlbl { color: #8c8c8c; margin-left: 0; }
.numfield { display: flex; width: 55px; height: 20px; background: #333; border-radius: 1px; overflow: hidden; flex: none; }
.nf-op { margin-left: 5px; }
.numv { flex: 1; line-height: 20px; padding-left: 3px; color: #e8e8e8; font-family: "Liberation Sans", sans-serif; font-size: 11.500px; }
.numfield .drop { width: 19px; }
.llock { height: 29px; padding-bottom: 3px; }
.lk { margin-left: 8px; }
.lkdim { color: #888; }
.fillbl { margin-left: 24px; }
.nf-fill { margin-left: 5px; background: #3f3f3f; }
.nf-fill .numv { color: #707070; }
.layers { flex: 1; min-height: 0; display: flex; }
.layerlist { width: 235px; flex: none; }
.layer { height: 30px; display: flex; border-bottom: 1px solid #3c3c3c; }
.eye { width: 31px; flex: none; display: flex; align-items: center; justify-content: center; border-right: 1px solid #3c3c3c; }
.lmain { flex: 1; display: flex; align-items: center; padding-left: 3px; position: relative; }
.layer.sel .lmain { background: #667a94; }
.lname { margin-left: 9px; color: #eee; white-space: nowrap; }
.lname.it { font-style: italic; font-size: 11px; }
.lthumb { width: 32px; height: 25px; text-align: center; font-size: 17px; line-height: 22px; color: #ddd; flex: none; }
.tsel { position: relative; background:
  linear-gradient(#fff,#fff) 0 0/8px 1px no-repeat, linear-gradient(#fff,#fff) 0 0/1px 8px no-repeat,
  linear-gradient(#fff,#fff) 100% 0/8px 1px no-repeat, linear-gradient(#fff,#fff) 100% 0/1px 8px no-repeat,
  linear-gradient(#fff,#fff) 0 100%/8px 1px no-repeat, linear-gradient(#fff,#fff) 0 100%/1px 8px no-repeat,
  linear-gradient(#fff,#fff) 100% 100%/8px 1px no-repeat, linear-gradient(#fff,#fff) 100% 100%/1px 8px no-repeat; }
.white { background: #fff; border: 1px solid #111; height: 23px; }
.lockbg { position: absolute; right: 18px; top: 9px; color: #ccc; }
.layerscroll { flex: 1; background: #484848; }
.pfoot-layers { gap: 13px; padding-right: 28px; border-top: 1px solid #6a6a6a; }
.fx { font: italic 13px "Liberation Serif", serif; color: #a8a8a8; }

/* floating character panel */
.charpanel { position: absolute; left: 1392px; top: 117px; width: 235px; height: 280px; background: #535353; display: flex; flex-direction: column; z-index: 3; }
.cp-arrows { color: #bbb; font: 9px "DejaVu Sans", sans-serif; letter-spacing: -1px; margin-right: 6px; padding-right: 5px; border-right: 1px solid #666; }
.cp-sec { border-bottom: 1px solid #424242; display: flex; flex: none; }
.s-a { padding: 6px 0 6px 9px; }
.s-b { flex-direction: column; gap: 5px; padding: 4px 0 5px 3px; }
.s-b .cp-row { height: 20px; }
.cp-row { display: flex; align-items: center; }
.cp-ic { width: 20px; height: 19px; text-align: center; font-size: 19px; line-height: 19px; color: #c6c6c6; flex: none; white-space: nowrap; overflow: visible; }
.cp-ic small { font-size: 12px; }
.cp-ic.sm { font-size: 12px; }
.cp-ic.va { font: bold 13px/19px "Liberation Sans", sans-serif; letter-spacing: -1px; }
.cp-ic2 { width: 19px; margin-left: 9px; color: #c6c6c6; font: bold 9px/9px "Liberation Sans", sans-serif; text-align: center; flex: none; }
.vab { background: #999; color: #333; font-size: 11px; line-height: 13px; border-bottom: 2px solid #ccc; }
.s-c { height: 30px; padding: 4px 0 5px 4px; }
.s-d { height: 51px; flex-direction: column; gap: 2px; padding: 4px 0 6px 4px; }
.s-d .cp-row { height: 19px; }
.numbox { width: 54px; height: 19px; background: #3b3b3b; line-height: 19px; padding-left: 4px; color: #e0e0e0; flex: none; font-size: 11.500px; }
.cp-ic3 { width: 88px; text-align: right; padding-right: 4px; font-size: 20px; line-height: 19px; color: #c6c6c6; flex: none; text-decoration: underline; }
.cp-color-lbl { width: 88px; text-align: right; padding-right: 8px; color: #ddd; flex: none; white-space: nowrap; }
.cp-color { width: 54px; height: 19px; background: #00ff1e; border: 1px solid #333; }
.s-e { height: 32px; align-items: center; padding-left: 19px; color: #c8c8c8; }
.s-e b { width: 24px; text-align: center; font-size: 14px; font-weight: 700; flex: none; white-space: nowrap; }
.s-e em { font-style: italic; }
.s-e small { font-size: 9px; }
.s-e sup, .s-e sub { font-size: 7px; line-height: 0; }
.s-f { color: #858585; }
.s-f b { font-size: 15px; }
.s-g { padding: 4px 0 0 7px; border-bottom: 0; align-items: center; }
.s-g .aa { width: 14px; }

/* overlays */
.arrows { position: absolute; left: 0; top: 0; z-index: 4; pointer-events: none; }
svg path.arrow { fill: #ee0d0d; }
.cursor { position: absolute; left: 1660px; top: 144px; z-index: 6; }
.tooltip { position: absolute; left: 1663px; top: 167px; width: 35px; height: 20px; background: #f2f2f2; color: #444; font-size: 11px; line-height: 20px; text-align: center; z-index: 5; }
.ime { position: absolute; left: 1340px; top: 991px; width: 60px; height: 25px; background: #fff; border-radius: 5px; box-shadow: 0 1px 3px rgba(0,0,0,.5); color: #333; line-height: 25px; text-align: center; font-size: 12px; font-family: "Liberation Sans", "DejaVu Sans", "Noto Sans CJK SC", sans-serif; z-index: 5; }
.watermark { position: absolute; left: 1723px; top: 979px; width: 197px; height: 58px; z-index: 5; pointer-events: none; }
.wm-logo { position: absolute; left: 0; top: 0; }
.wm-text { position: absolute; left: 63px; top: 0; display: flex; flex-direction: column; }
.wm-cn { font-size: 29.500px; line-height: 38px; font-weight: 700; color: #a5bccf; }
.wm-url { font: 14px/16px "Liberation Sans", sans-serif; color: #3c8a50; letter-spacing: 1px; margin-left: 20px; }
```
